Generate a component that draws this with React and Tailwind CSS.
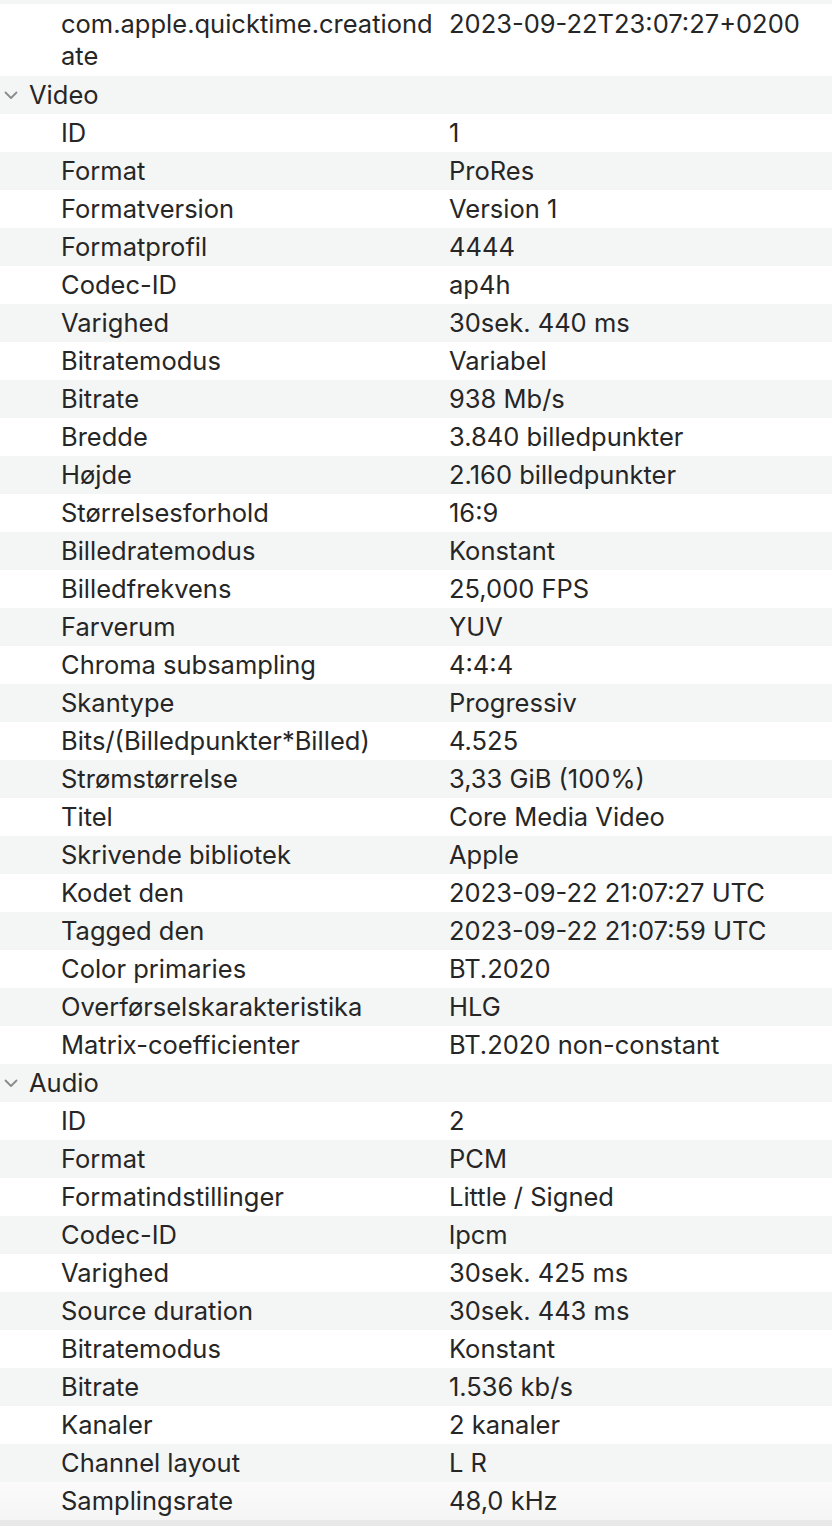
import React from "react";

const video = [
  ["ID", "1"],
  ["Format", "ProRes"],
  ["Formatversion", "Version 1"],
  ["Formatprofil", "4444"],
  ["Codec-ID", "ap4h"],
  ["Varighed", "30sek. 440 ms"],
  ["Bitratemodus", "Variabel"],
  ["Bitrate", "938 Mb/s"],
  ["Bredde", "3.840 billedpunkter"],
  ["Højde", "2.160 billedpunkter"],
  ["Størrelsesforhold", "16:9"],
  ["Billedratemodus", "Konstant"],
  ["Billedfrekvens", "25,000 FPS"],
  ["Farverum", "YUV"],
  ["Chroma subsampling", "4:4:4"],
  ["Skantype", "Progressiv"],
  ["Bits/(Billedpunkter*Billed)", "4.525"],
  ["Strømstørrelse", "3,33 GiB (100%)"],
  ["Titel", "Core Media Video"],
  ["Skrivende bibliotek", "Apple"],
  ["Kodet den", "2023-09-22 21:07:27 UTC"],
  ["Tagged den", "2023-09-22 21:07:59 UTC"],
  ["Color primaries", "BT.2020"],
  ["Overførselskarakteristika", "HLG"],
  ["Matrix-coefficienter", "BT.2020 non-constant"],
];

const audio = [
  ["ID", "2"],
  ["Format", "PCM"],
  ["Formatindstillinger", "Little / Signed"],
  ["Codec-ID", "lpcm"],
  ["Varighed", "30sek. 425 ms"],
  ["Source duration", "30sek. 443 ms"],
  ["Bitratemodus", "Konstant"],
  ["Bitrate", "1.536 kb/s"],
  ["Kanaler", "2 kanaler"],
  ["Channel layout", "L R"],
  ["Samplingsrate", "48,0 kHz"],
];

function Row({ k, v, gray, last }) {
  const bg = last
    ? "bg-gradient-to-b from-[#fbfbfb] to-[#f5f5f5]"
    : gray
    ? "bg-[#f4f5f5]"
    : "bg-white";
  return (
    <div className={`grid grid-cols-[449px_1fr] h-[38px] items-center ${bg}`}>
      <div className="pl-[61px] whitespace-nowrap">{k}</div>
      <div className="whitespace-nowrap">{v}</div>
    </div>
  );
}

function Chevron() {
  return (
    <svg width="14" height="10" viewBox="0 0 14 10" className="ml-[4px] mr-[11px]">
      <path d="M1.5 2.5 L7 8 L12.5 2.5" fill="none" stroke="#8b8b8b" strokeWidth="1.8" strokeLinecap="round" strokeLinejoin="round" />
    </svg>
  );
}

function Header({ label }) {
  return (
    <div className="flex items-center h-[38px] bg-[#f4f5f5]">
      <Chevron />
      <span>{label}</span>
    </div>
  );
}

export default function App() {
  return (
    <div
      className="w-[832px] h-[1526px] overflow-hidden bg-white text-[#262626] text-[25.5px] leading-[32px]"
      style={{ fontFamily: "Inter, 'Liberation Sans', sans-serif" }}
    >
      <div className="h-[4px] overflow-hidden bg-[#f4f5f5]">
        <div className="grid grid-cols-[449px_1fr] h-[38px] items-center mt-[-34px] text-[#8a8a8a]">
          <div className="pl-[61px] whitespace-nowrap">com.apple.quicktime.make</div>
          <div className="whitespace-nowrap">Apple</div>
        </div>
      </div>
      <div className="grid grid-cols-[449px_1fr] h-[72px] items-center bg-white">
        <div className="pl-[61px]">
          com.apple.quicktime.creationd
          <br />
          ate
        </div>
        <div className="self-start pt-[4px] whitespace-nowrap">2023-09-22T23:07:27+0200</div>
      </div>
      <Header label="Video" />
      {video.map(([k, v], i) => (
        <Row key={"v" + i} k={k} v={v} gray={i % 2 === 1} />
      ))}
      <Header label="Audio" />
      {audio.map(([k, v], i) => (
        <Row key={"a" + i} k={k} v={v} gray={i % 2 === 1} last={i === audio.length - 1} />
      ))}
      <div className="h-[6px] bg-[#e8e8e8]" />
    </div>
  );
}
